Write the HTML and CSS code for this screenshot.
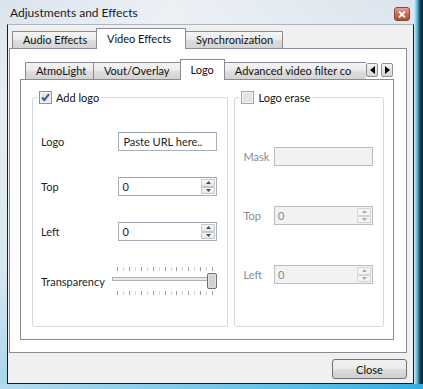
FILE: index.html
```html
<!DOCTYPE html>
<html lang="en">
<head>
    <meta charset="UTF-8">
    <meta name="viewport" content="width=device-width, initial-scale=1.0">
    <title>Adjustments and Effects</title>
    <link rel="stylesheet" href="styles.css">
</head>
<body>
<div class="window">
    <div class="titlebar">
        <span class="title">Adjustments and Effects</span>
        <span class="close-x">
            <svg width="8" height="7" viewBox="0 0 8 7"><path d="M1 0.5 L7 6.5 M7 0.5 L1 6.5" stroke="#fff" stroke-width="1.8"/></svg>
        </span>
    </div>

    <div class="client">
        <!-- Outer tabs -->
        <div class="tabs outer-tabs">
            <div class="tab tab-audio">Audio Effects</div>
            <div class="tab tab-video selected">Video Effects</div>
            <div class="tab tab-sync">Synchronization</div>
        </div>

        <div class="pane outer-pane">
            <!-- Inner tabs -->
            <div class="inner-tabbar">
                <div class="tabs-clip">
                    <div class="tabs">
                        <div class="tab cut"></div>
                        <div class="tab tab-atmo">AtmoLight</div>
                        <div class="tab tab-vout">Vout/Overlay</div>
                        <div class="tab tab-logo selected">Logo</div>
                        <div class="tab tab-adv">Advanced video filter co</div>
                    </div>
                </div>
                <div class="scroll-btns">
                    <span class="scroll-btn"><svg width="5" height="8" viewBox="0 0 5 8"><path d="M5 0 L0 4 L5 8 Z" fill="#000"/></svg></span>
                    <span class="scroll-btn"><svg width="5" height="8" viewBox="0 0 5 8"><path d="M0 0 L5 4 L0 8 Z" fill="#000"/></svg></span>
                </div>
            </div>

            <div class="pane inner-pane">
                <!-- Add logo -->
                <fieldset class="group group-logo">
                    <legend>
                        <svg class="check" width="13" height="13" viewBox="0 0 13 13">
                            <rect x="0.5" y="0.5" width="12" height="12" fill="#f6f6f6" stroke="#8e8f8f"/>
                            <rect x="2" y="2" width="9" height="9" fill="#e4e7ea"/>
                            <path d="M3 6.5 L5.3 9 L10 3.2" fill="none" stroke="#3d5286" stroke-width="1.9"/>
                        </svg>
                        Add logo
                    </legend>
                    <div class="form-grid">
                        <span class="label">Logo</span>
                        <div class="field">Paste URL here..</div>

                        <span class="label">Top</span>
                        <div class="spin">
                            <span class="val">0</span>
                            <span class="spin-btns">
                                <span class="spin-btn"><svg width="5" height="3" viewBox="0 0 5 3"><path d="M0 3 L2.5 0 L5 3 Z" fill="#4d4d4d"/></svg></span>
                                <span class="spin-btn"><svg width="5" height="3" viewBox="0 0 5 3"><path d="M0 0 L2.5 3 L5 0 Z" fill="#4d4d4d"/></svg></span>
                            </span>
                        </div>

                        <span class="label">Left</span>
                        <div class="spin">
                            <span class="val">0</span>
                            <span class="spin-btns">
                                <span class="spin-btn"><svg width="5" height="3" viewBox="0 0 5 3"><path d="M0 3 L2.5 0 L5 3 Z" fill="#4d4d4d"/></svg></span>
                                <span class="spin-btn"><svg width="5" height="3" viewBox="0 0 5 3"><path d="M0 0 L2.5 3 L5 0 Z" fill="#4d4d4d"/></svg></span>
                            </span>
                        </div>

                        <span class="label">Transparency</span>
                        <svg class="slider" width="106" height="28" viewBox="0 0 106 28">
                            <g stroke="#9c9c9c">
                                <path d="M5.5 0v4M17.5 0v4M29.5 0v4M41.5 0v4M53.5 0v4M64.5 0v4M76.5 0v4M88.5 0v4M100.5 0v4"/>
                                <path d="M5.5 24v4M17.5 24v4M29.5 24v4M41.5 24v4M53.5 24v4M64.5 24v4M76.5 24v4M88.5 24v4M100.5 24v4"/>
                            </g>
                            <g stroke="#d6d6d6">
                                <path d="M11.5 0v4M23.5 0v4M35.5 0v4M47.5 0v4M59.5 0v4M70.5 0v4M82.5 0v4M94.5 0v4"/>
                                <path d="M11.5 24v4M23.5 24v4M35.5 24v4M47.5 24v4M59.5 24v4M70.5 24v4M82.5 24v4M94.5 24v4"/>
                            </g>
                            <rect x="0.5" y="10.5" width="104" height="3" fill="#e7eaea" stroke="#b0b0b0"/>
                            <rect x="95.5" y="6.5" width="9" height="15" rx="1.5" fill="#e2e2e2" stroke="#6f6f6f"/>
                            <rect x="97" y="8" width="6" height="12" fill="#d2d2d2"/>
                        </svg>
                    </div>
                </fieldset>

                <!-- Logo erase (fields disabled) -->
                <fieldset class="group group-erase">
                    <legend>
                        <svg class="check" width="13" height="13" viewBox="0 0 13 13">
                            <rect x="0.5" y="0.5" width="12" height="12" fill="#f4f4f4" stroke="#a3a5a8"/>
                            <rect x="2" y="2" width="9" height="9" fill="#e3e3e3"/>
                        </svg>
                        Logo erase
                    </legend>
                    <div class="form-grid disabled">
                        <span class="label">Mask</span>
                        <div class="field"></div>

                        <span class="label">Top</span>
                        <div class="spin">
                            <span class="val">0</span>
                            <span class="spin-btns">
                                <span class="spin-btn"><svg width="5" height="3" viewBox="0 0 5 3"><path d="M0 3 L2.5 0 L5 3 Z" fill="#a8a8a8"/></svg></span>
                                <span class="spin-btn"><svg width="5" height="3" viewBox="0 0 5 3"><path d="M0 0 L2.5 3 L5 0 Z" fill="#a8a8a8"/></svg></span>
                            </span>
                        </div>

                        <span class="label">Left</span>
                        <div class="spin">
                            <span class="val">0</span>
                            <span class="spin-btns">
                                <span class="spin-btn"><svg width="5" height="3" viewBox="0 0 5 3"><path d="M0 3 L2.5 0 L5 3 Z" fill="#a8a8a8"/></svg></span>
                                <span class="spin-btn"><svg width="5" height="3" viewBox="0 0 5 3"><path d="M0 0 L2.5 3 L5 0 Z" fill="#a8a8a8"/></svg></span>
                            </span>
                        </div>
                    </div>
                </fieldset>
            </div>
        </div>

        <div class="button-bar">
            <button class="btn">Close</button>
        </div>
    </div>
</div>
</body>
</html>
```

FILE: styles.css
```css
body {
    margin: 0;
    font-family: Lato, "Liberation Sans", sans-serif;
    font-size: 11px;
    color: #1e1e1e;
}

/* Window frame (glass) */
.window {
    width: 423px;
    height: 389px;
    box-sizing: border-box;
    padding: 0 9px 5px 7px;
    display: flex;
    flex-direction: column;
    background:
        linear-gradient(to right, #b5dcef, #6cc3e8 60%, #37aee0) bottom / 100% 5px no-repeat,
        linear-gradient(to right, rgba(255, 255, 255, 0) 414px, #d6edf7 414px, #62b9e0 417px, #1d4663 420px, #0f1c27 423px),
        linear-gradient(to bottom, #dbe4ed 0%, #e8edf2 25%, #d6e6ef 70%, #a6d5ea 100%);
}

.titlebar {
    height: 24px;
    display: flex;
    justify-content: space-between;
    align-items: flex-start;
    padding-left: 3px;
    margin-right: 4px;
    background: linear-gradient(to right, rgba(255, 255, 255, 0), rgba(255, 255, 255, 0.45) 40%, rgba(255, 255, 255, 0));
}

.title {
    font-size: 12px;
    line-height: 16px;
    margin-top: 5px;
    color: #1a1a1a;
}

.close-x {
    margin-top: 7px;
    width: 16px;
    height: 14px;
    box-sizing: border-box;
    border: 1px solid #8c4535;
    border-radius: 3px;
    background: linear-gradient(#e2a595, #cc6a52 50%, #b94a2e);
    display: flex;
    align-items: center;
    justify-content: center;
}

.client {
    flex: 1;
    border: 1px solid #1b1b1b;
    border-top-color: #aab6c2;
    background: #f0f0f0;
    display: flex;
    flex-direction: column;
    padding: 3px 6px 0 1px;
}

/* Tabs */
.tabs {
    display: flex;
    align-items: flex-end;
}

.outer-tabs {
    margin-left: 3px;
    margin-bottom: -1px;
}

.tab {
    height: 16px;
    line-height: 16px;
    padding: 0 10px;
    border: 1px solid #898c95;
    background: linear-gradient(#f4f4f4, #ececec 45%, #dcdcdc 55%, #d4d4d4);
    white-space: nowrap;
    color: #111;
}

.tab + .tab {
    margin-left: -1px;
}

.tab.selected {
    position: relative;
    height: 20px;
    line-height: 19px;
    border-bottom: none;
    background: #fff;
}

.tab-audio { width: 63px; }
.tab-video { width: 68px; }
.tab-sync { width: 76px; }
.tab-atmo { width: 47px; }
.tab-vout { width: 66px; }
.tab-logo { width: 30px; }
.tab-adv { padding-right: 30px; }

.tab.cut {
    width: 5px;
    padding: 0;
    border-left: none;
}

.pane {
    border: 1px solid #898c95;
    background: #fff;
}

.outer-pane {
    flex: 1;
    display: flex;
    flex-direction: column;
    padding: 10px 12px 12px 10px;
}

.inner-tabbar {
    display: flex;
    margin-bottom: -1px;
    padding-left: 5px;
}

.tabs-clip {
    flex: 1;
    overflow: hidden;
}

.scroll-btns {
    display: flex;
    gap: 3px;
    margin: 4px 1px 0 0;
    height: 14px;
}

.scroll-btn {
    width: 12px;
    box-sizing: border-box;
    border: 1px solid #8e8f8f;
    border-radius: 2px;
    background: linear-gradient(#f6f6f6, #e4e4e4 50%, #d6d6d6);
    display: flex;
    align-items: center;
    justify-content: center;
}

.inner-pane {
    flex: 1;
    display: flex;
    gap: 6px;
    padding: 11px 9px 12px 11px;
}

/* Group boxes */
.group {
    margin: 0;
    border: 1px solid #d3d8dc;
    border-radius: 3px;
    min-width: 0;
}

.group legend {
    display: flex;
    align-items: center;
    gap: 4px;
    height: 13px;
    line-height: 13px;
    padding: 0 2px;
    margin-left: -4px;
    color: #111;
}

.group-logo {
    width: 177px;
    padding: 28px 10px 0 8px;
}

.group-erase {
    width: 130px;
    padding: 43px 10px 0 8px;
}

.form-grid {
    display: grid;
    grid-template-columns: 1fr 99px;
    align-items: center;
}

.group-logo .form-grid {
    grid-template-rows: 19px 19px 19px 28px;
    row-gap: 26px;
}

.group-erase .form-grid {
    grid-template-rows: 19px 19px 19px;
    row-gap: 40px;
}

.field,
.spin {
    height: 19px;
    box-sizing: border-box;
    border: 1px solid #a6b0bb;
    border-top-color: #9aa3ad;
    background: #fff;
}

.field {
    padding-left: 4px;
    line-height: 17px;
}

.spin {
    display: flex;
}

.spin .val {
    flex: 1;
    padding-left: 3px;
    line-height: 17px;
}

.spin-btns {
    width: 16px;
    display: flex;
    flex-direction: column;
    padding: 1px;
    box-sizing: border-box;
}

.spin-btn {
    flex: 1;
    border: 1px solid #c4c8cd;
    border-radius: 1px;
    background: linear-gradient(#f8f8f8, #e6e6e6);
    display: flex;
    align-items: center;
    justify-content: center;
}

.slider {
    margin-left: -6px;
}

.disabled,
.disabled .label {
    color: #8b8b8b;
}

.disabled .field,
.disabled .spin {
    background: #f2f2f2;
    border-color: #bdbdbd;
}

.disabled .spin-btn {
    border-color: #d4d4d4;
    background: #f4f4f4;
}

/* Bottom button row */
.button-bar {
    height: 30px;
    display: flex;
    justify-content: flex-end;
    align-items: flex-start;
    padding-top: 6px;
    box-sizing: border-box;
}

.btn {
    width: 75px;
    height: 20px;
    font-family: inherit;
    font-size: 11px;
    color: #111;
    border: 1px solid #707070;
    border-radius: 3px;
    background: linear-gradient(#f2f2f2, #ebebeb 48%, #dddddd 52%, #cfcfcf);
    padding: 0;
}
```
